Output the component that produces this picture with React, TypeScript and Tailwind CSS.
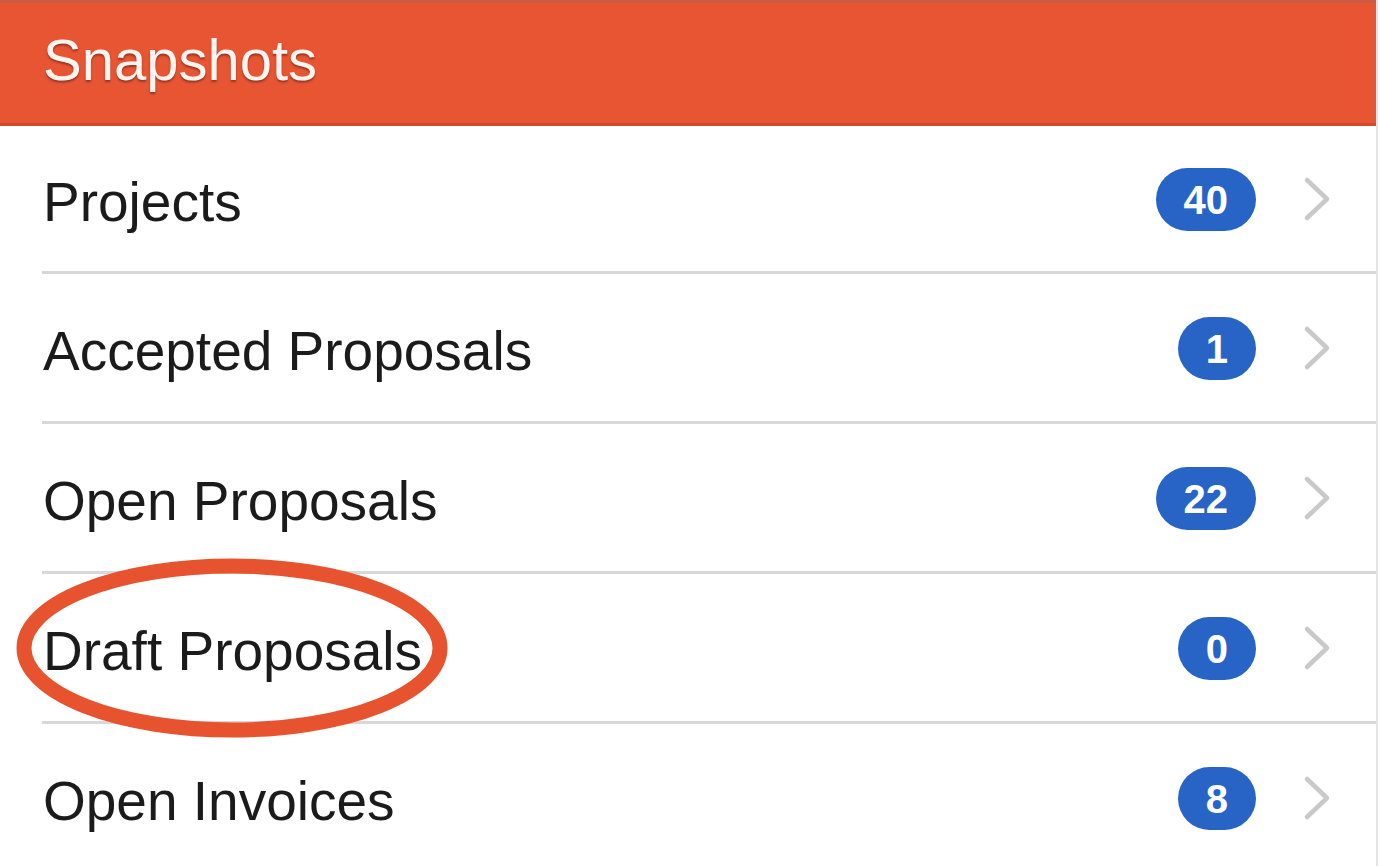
import React from 'react';

type Item = { label: string; count: number };

const items: Item[] = [
  { label: 'Projects', count: 40 },
  { label: 'Accepted Proposals', count: 1 },
  { label: 'Open Proposals', count: 22 },
  { label: 'Draft Proposals', count: 0 },
  { label: 'Open Invoices', count: 8 },
];

function Chevron() {
  return (
    <svg width="30" height="46" viewBox="0 0 30 46" className="shrink-0">
      <polyline points="5,4 25,23 5,42" fill="none" stroke="#c9c9c9" strokeWidth="4.5" strokeLinecap="round" strokeLinejoin="round" />
    </svg>
  );
}

export default function App() {
  return (
    <div className="relative w-[1380px] h-[866px] overflow-hidden bg-white font-['Liberation_Sans',Arial,sans-serif]">
      <div className="w-[1378px] h-full border-r-2 border-[#e4e4e4]">
        {/* Header */}
        <div className="h-[126px] bg-[#e75533] border-t-[3px] border-t-[#cc5a44] border-b-[3px] border-b-[#d14a2c] flex items-center pl-[43px]">
          <span className="text-[58px] leading-none text-[#fdf3ef] [text-shadow:0_2px_2px_rgba(90,30,20,0.55)] -mt-[6px]">
            Snapshots
          </span>
        </div>

        {/* List */}
        {items.map((item, i) => (
          <div
            key={item.label}
            className={`ml-[42px] flex items-center border-b-[3px] border-[#d8d8d8] pl-px pr-[44px] ${i === 0 ? 'h-[148px]' : 'h-[150px]'}`}
          >
            <span className="flex-1 text-[55px] leading-none text-[#1b1b1b] pt-[8px]">{item.label}</span>
            <span className="h-[63px] min-w-[77px] px-[28px] rounded-full bg-[#2764c6] text-white text-[40px] font-bold flex items-center justify-center mt-[2px]">
              {item.count}
            </span>
            <span className="ml-[46px]">
              <Chevron />
            </span>
          </div>
        ))}
      </div>

      {/* Annotation ellipse */}
      <svg className="absolute left-[14px] top-[556px] pointer-events-none" width="436" height="184" viewBox="0 0 436 184">
        <ellipse cx="218" cy="92" rx="208" ry="82" fill="none" stroke="#e8532f" strokeWidth="15" />
      </svg>
    </div>
  );
}
